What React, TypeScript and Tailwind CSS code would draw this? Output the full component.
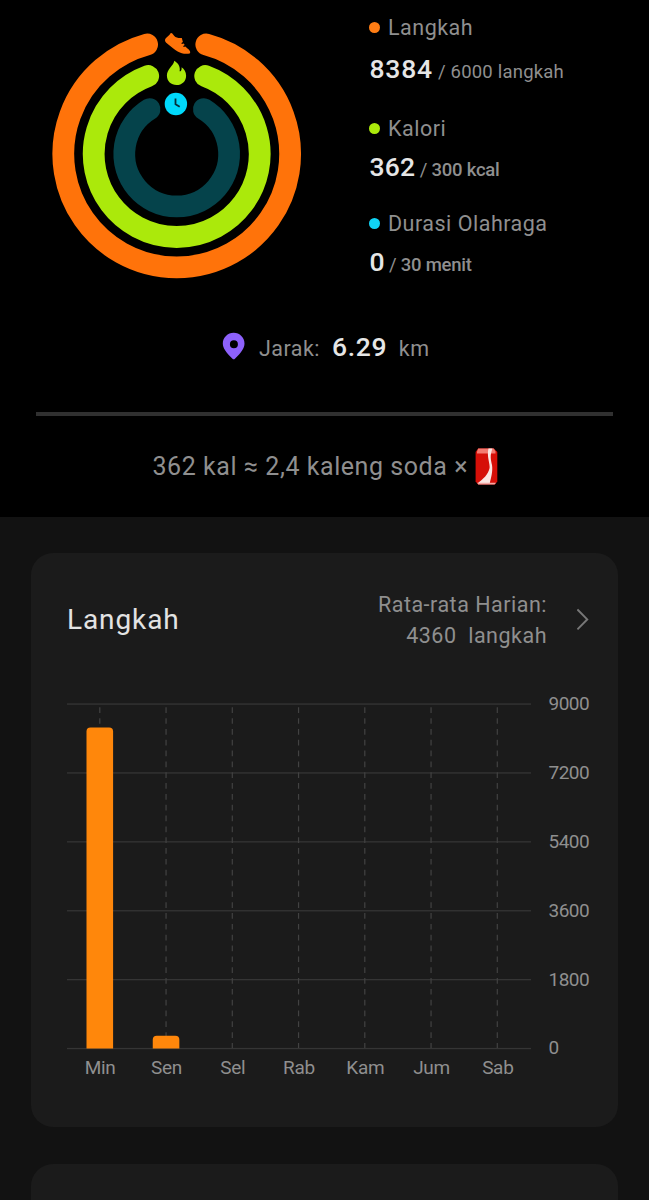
const RINGS = [
  { r: 113.4, dx: 29.6, color: '#ff730a' },
  { r: 83, dx: 28.5, color: '#abe90b' },
  { r: 52.4, dx: 27.1, color: '#05434b' },
];

function ringPath(r: number, dx: number) {
  const y = 154 - Math.sqrt(r * r - dx * dx);
  return `M${176.7 + dx} ${y}A${r} ${r} 0 1 1 ${176.7 - dx} ${y}`;
}

function Rings() {
  return (
    <svg className="block h-[300px] w-[369px] shrink-0" viewBox="0 0 369 300" fill="none">
      {RINGS.map((ring) => (
        <path key={ring.color} d={ringPath(ring.r, ring.dx)} stroke={ring.color} strokeWidth="21.8" strokeLinecap="round" />
      ))}
      <path
        d="M170.6 33.2C169.4 35.8 167.2 36.1 165.4 38.7C164.7 40 164.9 41.5 166.2 42.8L173 48.2C176 50.8 179.5 52.3 181.8 53.2C184 54 187.5 54 189.6 53.6C190.5 53 190.3 51.6 189.5 50.5C188.3 48.9 186.8 48 185.3 46.6L183.6 47L183.2 46.1L184.7 45L183.7 43.5L181.8 43.9L181.4 43L182.9 41.9L181.8 38C179.2 38.4 175.8 37.8 174.3 36L172.3 33.4C171.8 32.8 171 32.7 170.6 33.2Z"
        fill="#ff730a"
      />
      <path
        d="M174.3 60.7C173.7 65.5 166.9 69 166.9 75.6C166.9 81.3 171.2 85.1 176.5 85.1C182 85.1 186.1 81.2 186.1 75.7C186.1 71.8 184.2 69 181.6 67.2C181.8 69 181.4 70.4 180.6 71.2L179.6 71.2C180.6 66.6 178 62.9 174.3 60.7Z"
        fill="#abe90b"
      />
      <circle cx="175.9" cy="104" r="11.2" fill="#00d9fb" />
      <path d="M175.5 98.6V104.3L179.7 106.8" stroke="#052e38" strokeWidth="1.8" />
    </svg>
  );
}

function App() {
  return (
    <div className="h-[1200px] w-[649px] overflow-hidden bg-[#121212] font-['Roboto',sans-serif] text-[#8f8f8f]">
      <section className="h-[517px] bg-black">
        <div className="flex h-[300px]">
          <Rings />
          <div className="pt-[15px] whitespace-nowrap">
            <div className="flex h-[26px] items-center">
              <span className="mb-px size-[11px] rounded-full bg-[#ff7d14]" />
              <span className="ml-[8px] text-[21.5px] leading-[24px] tracking-[0.5px]">Langkah</span>
            </div>
            <div className="mt-[13px] flex h-[30px] items-baseline pl-[0.5px] leading-[30px]">
              <span className="text-[26.5px] font-medium tracking-[0.8px] text-[#e6e6e6]">8384</span>
              <span className="ml-[5px] text-[18.5px] tracking-[0.2px]">/ 6000 langkah</span>
            </div>
            <div className="mt-[32px] flex h-[26px] items-center">
              <span className="mb-px size-[11px] rounded-full bg-[#abe90b]" />
              <span className="ml-[8px] text-[21.5px] leading-[24px] tracking-[0.5px]">Kalori</span>
            </div>
            <div className="mt-[10px] flex h-[30px] items-baseline pl-[0.5px] leading-[30px]">
              <span className="text-[26.5px] font-medium tracking-[0.2px] text-[#e6e6e6]">362</span>
              <span className="ml-[4.5px] text-[18.5px] tracking-[-0.25px]">/ <span className="font-medium">300 kcal</span></span>
            </div>
            <div className="mt-[29px] flex h-[26px] items-center">
              <span className="mb-px size-[11px] rounded-full bg-[#10d4f6]" />
              <span className="ml-[8px] text-[21.5px] leading-[24px] tracking-[0.5px]">Durasi Olahraga</span>
            </div>
            <div className="mt-[10px] flex h-[30px] items-baseline pl-[0.5px] leading-[30px]">
              <span className="text-[26.5px] font-medium text-[#e6e6e6]">0</span>
              <span className="ml-[4.5px] text-[18.5px] tracking-[-0.25px]">/ <span className="font-medium">30 menit</span></span>
            </div>
          </div>
        </div>

        <div className="flex h-[112px] pt-[31px] pl-[222px] whitespace-nowrap">
          <svg className="mt-px h-[30px] w-[24px]" viewBox="0 0 24 30" fill="none">
            <path
              fillRule="evenodd"
              d="M11.7 .8C5.7 .8 .8 5.6 .8 11.5C.8 16.4 4.2 20.5 10.5 26.7Q11.7 27.9 12.9 26.7C19.2 20.5 22.5 16.4 22.5 11.5C22.5 5.6 17.7 .8 11.7 .8ZM11.9 8.3A4 4 0 1 1 11.9 16.3A4 4 0 1 1 11.9 8.3Z"
              fill="#8d61fb"
            />
          </svg>
          <div className="flex h-[32px] items-baseline leading-[32px]">
            <span className="ml-[13px] text-[21.5px] tracking-[0.45px]">Jarak:</span>
            <span className="ml-[12px] text-[26.5px] font-medium tracking-[0.7px] text-[#e6e6e6]">6.29</span>
            <span className="ml-[11.5px] text-[21.5px] tracking-[0.45px]">km</span>
          </div>
        </div>

        <div className="mx-9 h-[4px] bg-[#303030]" />

        <div className="flex h-[101px] items-center pl-[152.5px] whitespace-nowrap">
          <span className="w-[316px] text-[25px] tracking-[0.56px]">362 kal ≈ 2,4 kaleng soda ×</span>
          <svg className="ml-[6px] h-[37px] w-[23px]" viewBox="0 0 23 37">
            <path d="M3.2 .5H18.8L22.3 4V33.5L20 36.5H3.2L.6 33.5V4Z" fill="#d60f08" />
            <path d="M3.2 .5H18.8L20.5 3.5V5.5H2V3.5Z" fill="#f47a70" />
            <path d="M13.5 .5H17.5C14.5 8 16 12 17 17C18 23 16 30 14.8 35H3C8 31 13 27 14.6 20C15.2 16 11.5 8 13.5 .5Z" fill="#fbe6e3" />
            <path d="M2.2 34.7H21L19.5 36.5H3.2Z" fill="#f3a7a3" />
          </svg>
        </div>
      </section>

      <main className="px-[31px] pt-9">
        <section className="h-[574px] w-[587px] rounded-[22px] bg-[#1b1b1b] pt-[36px] pr-[29px] pl-9">
          <header className="flex h-[62px] items-center whitespace-nowrap">
            <h1 className="text-[28px] tracking-[0.9px] text-[#e3e3e3]">Langkah</h1>
            <div className="ml-auto text-right text-[21.5px] leading-[31px] tracking-[0.5px]">
              <div>Rata-rata Harian:</div>
              <div>4360 &nbsp;langkah</div>
            </div>
            <svg className="ml-[30px] h-[24px] w-[12px]" viewBox="0 0 12 24" fill="none">
              <path d="M.4 1.4L10.2 11.4L.4 21.4" stroke="#777" strokeWidth="2" />
            </svg>
          </header>
          <Chart />
        </section>
        <section className="mt-[37px] h-[100px] w-[587px] rounded-[22px] bg-[#1b1b1b]" />
      </main>
    </div>
  );
}

const DAYS = ['Min', 'Sen', 'Sel', 'Rab', 'Kam', 'Jum', 'Sab'];
const STEPS = [8384, 336, 0, 0, 0, 0, 0];
const TICKS = [9000, 7200, 5400, 3600, 1800, 0];

function Chart() {
  return (
    <div className="mt-[42px] flex text-[19px] tracking-[-0.3px]">
      <div className="w-[464px]">
        <svg className="mt-[10px] block h-[347px] w-[464px]" viewBox="0 0 464 347">
          {TICKS.map((t, i) => (
            <rect key={t} x="0" y={0.4 + i * 68.9} width="464" height="1.3" fill="#353535" />
          ))}
          {DAYS.map((day, i) => {
            const x = 32.8 + i * 66.25;
            const h = (STEPS[i] / 9000) * 344.5;
            return (
              <g key={day}>
                <path d={`M${x} 4.3V345`} stroke="#424242" strokeWidth="1.2" strokeDasharray="5.7 5.13" />
                {h > 0 && <path d={`M${x - 13.3} 345.5V${345.5 - h + 4}q0-4 4-4h18.6q4 0 4 4V345.5Z`} fill="#ff870b" />}
              </g>
            );
          })}
        </svg>
        <div className="grid grid-cols-7 pt-[7px] text-center leading-[22px]">
          {DAYS.map((day) => (
            <span key={day}>{day}</span>
          ))}
        </div>
      </div>
      <div className="ml-[17.5px] flex flex-col tracking-[-0.5px]">
        {TICKS.map((t) => (
          <span key={t} className="h-[68.9px] leading-[21px]">{t}</span>
        ))}
      </div>
    </div>
  );
}

export default App;
